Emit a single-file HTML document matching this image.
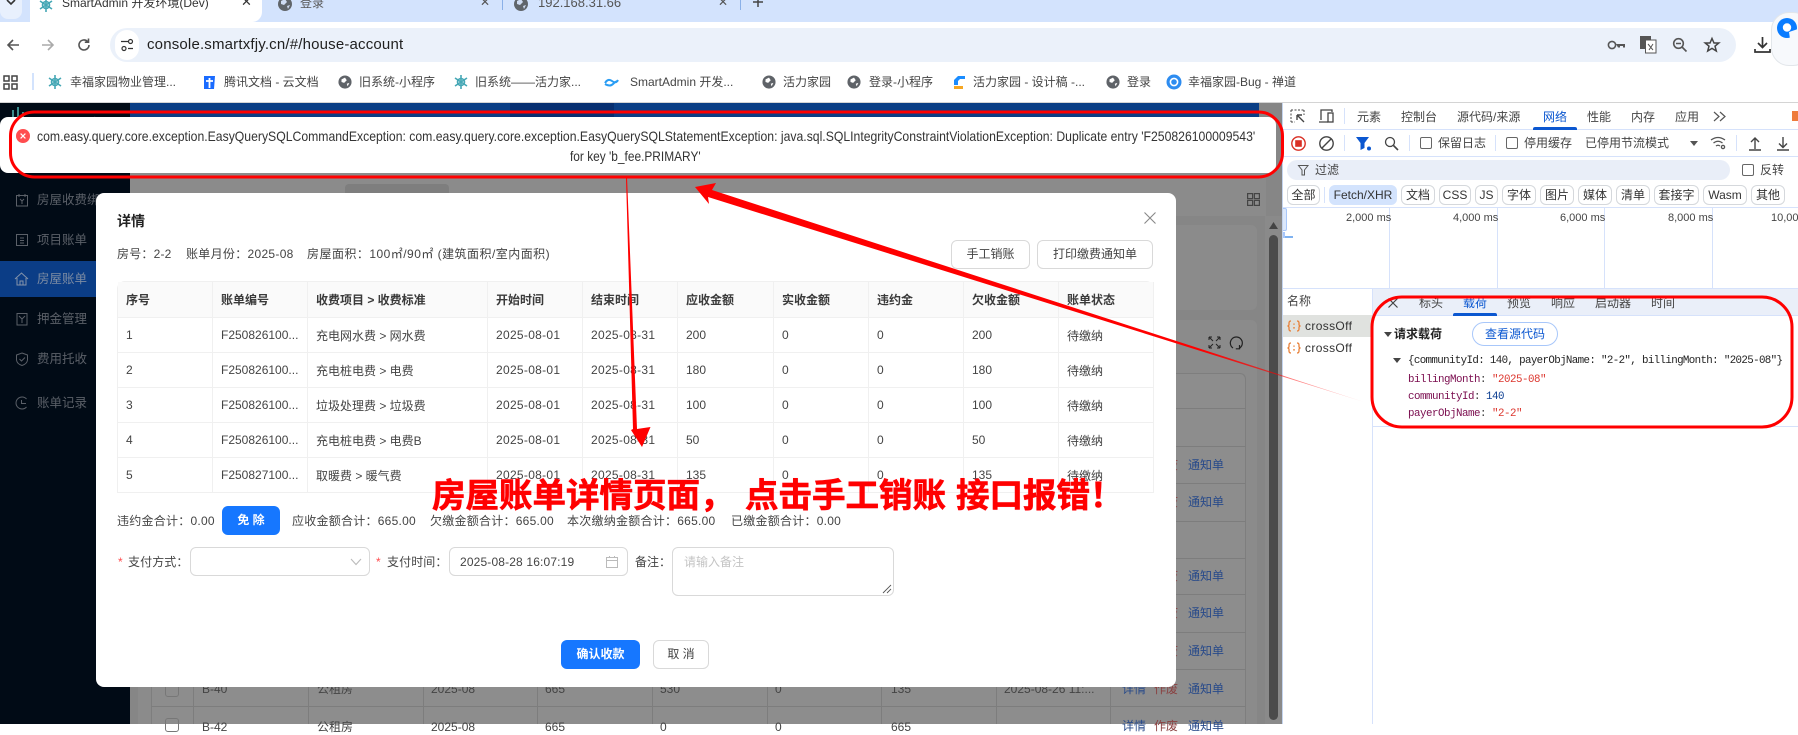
<!DOCTYPE html>
<html lang="zh"><head><meta charset="utf-8"><title>SmartAdmin</title>
<style>
*{box-sizing:border-box}
html,body{margin:0;padding:0;width:1798px;height:724px;overflow:hidden;background:#fff;font-family:"Liberation Sans","Noto Sans CJK SC",sans-serif;font-size:12px;color:#333}
.a{position:absolute}
.t{position:absolute;white-space:nowrap;transform:translateY(-50%);line-height:16px}
svg{position:absolute;overflow:visible}
.l{position:absolute;background:#7d7d7d}
.bm{color:#444}
.side{color:#5b6068;font-size:12.5px}
.chip{position:absolute;top:185px;height:20px;border:1px solid #d5d8dc;border-radius:6px;text-align:center;line-height:18px;color:#333;font-size:12px}
.dt{color:#444}
.bg{color:#444}
.sum{letter-spacing:.25px;color:#444}
.mono{font-family:'Liberation Mono',monospace;font-size:10.8px;letter-spacing:-.48px;color:#7a0c4e}
table.d{position:absolute;left:21px;top:88px;width:1036px;border-collapse:separate;border-spacing:0;table-layout:fixed;font-size:12px;color:#444;border-top:1px solid #f0f0f0;border-left:1px solid #f0f0f0;border-radius:8px 8px 0 0}
table.d th,table.d td{border-right:1px solid #f0f0f0;border-bottom:1px solid #f0f0f0;padding:0 8px;text-align:left;white-space:nowrap;overflow:hidden;height:35px}
table.d th{background:#fafafa;font-weight:700;color:#3a3a3a;height:36px}
table.d td.dd{letter-spacing:.3px}
.btn{position:absolute;border:1px solid #d9d9d9;border-radius:6px;background:#fff;text-align:center;color:#444;font-size:12px}
.inp{position:absolute;border:1px solid #d9d9d9;border-radius:6px;background:#fff}
.req{color:#ff4d4f}
.big{position:absolute;color:#f00;font-weight:700;font-size:33.5px;line-height:40px;white-space:nowrap;top:473px;font-family:"Noto Sans CJK SC","Liberation Sans",sans-serif;-webkit-text-stroke:.6px #f00;text-shadow:0 0 1px #ff8ac0}
</style></head><body>

<!-- tab strip -->
<div class="a" style="left:0;top:0;width:1798px;height:22px;background:#d3e3fd"></div>
<div class="a" style="left:0;top:0;width:22px;height:19px;background:#e8f0fd;border-radius:0 0 8px 8px"></div>
<svg style="left:6px;top:0" width="12" height="8"><path d="M1 0 L5 4 L9 0" fill="none" stroke="#333" stroke-width="1.6"/></svg>
<div class="a" style="left:30px;top:0;width:232px;height:22px;background:#fff;border-radius:0 0 10px 0"></div>
<svg style="left:38px;top:-3px" width="16" height="16" viewBox="0 0 16 16"><g stroke="#45a7b5" stroke-width="1.6" fill="none"><path d="M8 1V15M2 4L14 12M14 4L2 12"/><circle cx="8" cy="8" r="3.5"/></g></svg>
<div class="t" style="left:62px;top:3px;color:#333">SmartAdmin 开发环境(Dev)</div>
<div class="t" style="left:241px;top:2px;font-size:13px;color:#333">✕</div>
<svg style="left:277px;top:-4px" width="16" height="16" viewBox="0 0 16 16"><circle cx="8" cy="8" r="7" fill="#60656a"/><path d="M4 5L8 3L10 6L7 9L4 8ZM10 10L13 9L11 13Z" fill="#cfdcf2"/></svg>
<div class="t" style="left:300px;top:3px;color:#555">登录</div>
<div class="t" style="left:480px;top:2px;font-size:12px;color:#555">✕</div>
<div class="a" style="left:502px;top:0;width:1px;height:10px;background:#8ab0e8"></div>
<svg style="left:513px;top:-4px" width="16" height="16" viewBox="0 0 16 16"><circle cx="8" cy="8" r="7" fill="#60656a"/><path d="M4 5L8 3L10 6L7 9L4 8ZM10 10L13 9L11 13Z" fill="#cfdcf2"/></svg>
<div class="t" style="left:538px;top:3px;color:#555;font-size:13px">192.168.31.66</div>
<div class="t" style="left:718px;top:2px;font-size:12px;color:#555">✕</div>
<div class="a" style="left:740px;top:0;width:1px;height:10px;background:#8ab0e8"></div>
<svg style="left:752px;top:-3px" width="12" height="12"><path d="M6 0V10M1 5H11" stroke="#444" stroke-width="1.5"/></svg>

<!-- toolbar -->
<svg style="left:5px;top:37px" width="16" height="16" viewBox="0 0 16 16"><path d="M14 8H3M8 3L3 8L8 13" fill="none" stroke="#555" stroke-width="1.6"/></svg>
<svg style="left:40px;top:37px" width="16" height="16" viewBox="0 0 16 16"><path d="M2 8H13M8 3L13 8L8 13" fill="none" stroke="#aaa" stroke-width="1.6"/></svg>
<svg style="left:76px;top:37px" width="16" height="16" viewBox="0 0 16 16"><path d="M13 8A5 5 0 1 1 11.5 4.4M12.5 1.5V5.2H8.8" fill="none" stroke="#555" stroke-width="1.6"/></svg>
<div class="a" style="left:110px;top:28px;width:1626px;height:34px;background:#ebf1fa;border-radius:17px"></div>
<div class="a" style="left:115px;top:30px;width:24px;height:30px;background:#fff;border-radius:14px"></div>
<svg style="left:120px;top:38px" width="14" height="14" viewBox="0 0 14 14"><g fill="none" stroke="#333" stroke-width="1.2"><path d="M1 3.5H8M8 10.5H13"/><circle cx="10.5" cy="3.5" r="2"/><circle cx="4" cy="10.5" r="2"/></g></svg>
<div class="t" style="left:147px;top:45px;font-size:15px;color:#1f1f1f;letter-spacing:.18px">console.smartxfjy.cn/#/house-account</div>
<svg style="left:1607px;top:38px" width="20" height="14" viewBox="0 0 20 14"><circle cx="5" cy="7" r="3.6" fill="none" stroke="#555" stroke-width="1.6"/><path d="M9 6H18V9.5H16V8H13V9.5H11" fill="#555"/></svg>
<svg style="left:1640px;top:36px" width="17" height="18" viewBox="0 0 17 18"><rect x="0" y="0" width="11" height="13" fill="#555"/><rect x="5.5" y="4" width="10.5" height="13" fill="#fff" stroke="#555"/><path d="M8 8L13 14M13 8L9 14" stroke="#555"/></svg>
<svg style="left:1672px;top:37px" width="16" height="16" viewBox="0 0 16 16"><circle cx="6.5" cy="6.5" r="4.8" fill="none" stroke="#555" stroke-width="1.6"/><path d="M10 10L14.5 14.5M4 6.5H9" stroke="#555" stroke-width="1.6"/></svg>
<svg style="left:1704px;top:37px" width="16" height="16" viewBox="0 0 16 16"><path d="M8 1.5L10 6H14.8L11 9.2L12.3 14L8 11.4L3.7 14L5 9.2L1.2 6H6Z" fill="none" stroke="#444" stroke-width="1.5"/></svg>
<svg style="left:1754px;top:36px" width="17" height="18" viewBox="0 0 17 18"><path d="M8.5 1V11M4 7L8.5 11.5L13 7M1 13V16H16V13" fill="none" stroke="#333" stroke-width="1.7"/></svg>
<div class="a" style="left:1771px;top:12px;width:40px;height:54px;background:#f7f9fc;border:1px solid #e2e6ea;border-radius:18px"></div>
<svg style="left:1776px;top:17px" width="22" height="22" viewBox="0 0 22 22"><circle cx="11" cy="11" r="10" fill="#0a7cff"/><circle cx="11" cy="10.5" r="4.2" fill="#fff"/><path d="M13 15L22 12V22H14Z" fill="#f7f9fc"/></svg>

<!-- bookmarks -->
<svg style="left:3px;top:75px" width="15" height="15"><g fill="none" stroke="#444" stroke-width="1.5"><rect x="1" y="1" width="5" height="5"/><rect x="9" y="1" width="5" height="5"/><rect x="1" y="9" width="5" height="5"/><rect x="9" y="9" width="5" height="5"/></g></svg>
<div class="a" style="left:32px;top:73px;width:2px;height:17px;background:#d3e3fd"></div>
<svg style="left:47px;top:74px" width="16" height="16" viewBox="0 0 16 16"><g stroke="#45a7b5" stroke-width="1.6" fill="none"><path d="M8 1V15M2 4L14 12M14 4L2 12"/><circle cx="8" cy="8" r="3.5"/></g></svg>
<div class="t bm" style="left:70px;top:82px">幸福家园物业管理...</div>
<svg style="left:202px;top:74px" width="15" height="16" viewBox="0 0 15 16"><path d="M2 2H13L12 15H2Z" fill="#1a6bff"/><path d="M7.5 4V14M4 7H11" stroke="#fff" stroke-width="1.8"/></svg>
<div class="t bm" style="left:224px;top:82px">腾讯文档 - 云文档</div>
<svg style="left:338px;top:75px" width="14" height="14" viewBox="0 0 16 16"><circle cx="8" cy="8" r="7.5" fill="#5f6368"/><path d="M4 5L8 3L10 6L7 9L4 8ZM10 10L13 9L11 13Z" fill="#fff"/></svg>
<div class="t bm" style="left:359px;top:82px">旧系统-小程序</div>
<svg style="left:453px;top:74px" width="16" height="16" viewBox="0 0 16 16"><g stroke="#45a7b5" stroke-width="1.6" fill="none"><path d="M8 1V15M2 4L14 12M14 4L2 12"/><circle cx="8" cy="8" r="3.5"/></g></svg>
<div class="t bm" style="left:475px;top:82px">旧系统——活力家...</div>
<svg style="left:604px;top:76px" width="15" height="12" viewBox="0 0 15 12"><path d="M1 7Q4 2 8 5T14 4M1 8Q6 11 9 8T14 5" fill="none" stroke="#2a9df4" stroke-width="2"/></svg>
<div class="t bm" style="left:630px;top:82px">SmartAdmin 开发...</div>
<svg style="left:762px;top:75px" width="14" height="14" viewBox="0 0 16 16"><circle cx="8" cy="8" r="7.5" fill="#5f6368"/><path d="M4 5L8 3L10 6L7 9L4 8ZM10 10L13 9L11 13Z" fill="#fff"/></svg>
<div class="t bm" style="left:783px;top:82px">活力家园</div>
<svg style="left:847px;top:75px" width="14" height="14" viewBox="0 0 16 16"><circle cx="8" cy="8" r="7.5" fill="#5f6368"/><path d="M4 5L8 3L10 6L7 9L4 8ZM10 10L13 9L11 13Z" fill="#fff"/></svg>
<div class="t bm" style="left:869px;top:82px">登录-小程序</div>
<svg style="left:952px;top:75px" width="14" height="14" viewBox="0 0 14 14"><path d="M13 1H6L2 5V10H6V6L8 4H13Z" fill="#1a8cff"/><path d="M2 11H11V14H2Z" fill="#f5a623"/></svg>
<div class="t bm" style="left:973px;top:82px">活力家园 - 设计稿 -...</div>
<svg style="left:1106px;top:75px" width="14" height="14" viewBox="0 0 16 16"><circle cx="8" cy="8" r="7.5" fill="#5f6368"/><path d="M4 5L8 3L10 6L7 9L4 8ZM10 10L13 9L11 13Z" fill="#fff"/></svg>
<div class="t bm" style="left:1127px;top:82px">登录</div>
<svg style="left:1166px;top:74px" width="16" height="16" viewBox="0 0 16 16"><circle cx="8" cy="8" r="7.5" fill="#2d8cf0"/><circle cx="8" cy="8" r="3.6" fill="none" stroke="#fff" stroke-width="1.6"/></svg>
<div class="t bm" style="left:1188px;top:82px">幸福家园-Bug - 禅道</div>
<div class="a" style="left:0;top:102px;width:1798px;height:1px;background:#d4d4d4"></div>

<!-- page behind overlay -->
<div class="a" style="left:0;top:103px;width:1282px;height:621px;background:#868686"></div>
<div class="a" style="left:0;top:103px;width:130px;height:621px;background:#010b16"></div>
<div class="a" style="left:130px;top:103px;width:1129px;height:14px;background:#0a3e85"></div>
<div class="a" style="left:510px;top:103px;width:104px;height:14px;background:#072f70"></div>
<div class="t" style="left:60px;top:124px;font-size:14px;color:#7c8288">幸福家园</div>
<svg style="left:8px;top:106px" width="18" height="14"><path d="M5 14V4M10 14V1M15 14V6" stroke="#3a8d8d" stroke-width="2"/></svg>

<!-- sidebar -->
<div class="a" style="left:0;top:261px;width:130px;height:36px;background:#0b3d86"></div>
<svg style="left:15px;top:193px" width="14" height="14"><g fill="none" stroke="#5b6068"><rect x="1.5" y="2.5" width="11" height="10.5"/><path d="M4 1V4M10 1V4M5 6L7 8L9 6M7 8V11"/></g></svg>
<div class="t side" style="left:37px;top:200px">房屋收费绑定</div>
<svg style="left:15px;top:233px" width="14" height="14"><g fill="none" stroke="#5b6068"><rect x="1.5" y="1.5" width="11" height="11"/><path d="M5 5H9M5 7.5H9M5 10H9"/></g></svg>
<div class="t side" style="left:37px;top:240px">项目账单</div>
<svg style="left:14px;top:271px" width="15" height="15"><g fill="none" stroke="#8494ab"><path d="M1 8L7.5 2L14 8M3 7V14H12V7M6 14V10H9V14"/></g></svg>
<div class="t side" style="left:37px;top:279px;color:#7d8ca3">房屋账单</div>
<svg style="left:15px;top:312px" width="14" height="14"><g fill="none" stroke="#5b6068"><rect x="2" y="1.5" width="10" height="11.5"/><path d="M4 4L7 7L10 4M7 7V11"/></g></svg>
<div class="t side" style="left:37px;top:319px">押金管理</div>
<svg style="left:15px;top:352px" width="14" height="14"><g fill="none" stroke="#5b6068"><path d="M7 1L12.5 3V8Q12 12 7 13.5Q2 12 1.5 8V3ZM4.5 7L6.5 9L10 5.5"/></g></svg>
<div class="t side" style="left:37px;top:359px">费用托收</div>
<svg style="left:14px;top:396px" width="15" height="14"><g fill="none" stroke="#5b6068"><path d="M12.5 11A6 6 0 1 1 12.5 3M7.5 4V7.5H12"/></g></svg>
<div class="t side" style="left:37px;top:403px">账单记录</div>

<!-- page content behind -->
<div class="a" style="left:130px;top:173px;width:1136px;height:43px;background:#8b8b8b"></div>
<div class="a" style="left:345px;top:184px;width:104px;height:20px;background:#7e7e7e;border-radius:4px 4px 0 0"></div>
<svg style="left:1247px;top:193px" width="14" height="14"><g fill="none" stroke="#444" stroke-width="1.2"><rect x=".6" y=".6" width="5" height="5"/><rect x="7.4" y=".6" width="5" height="5"/><rect x=".6" y="7.4" width="5" height="5"/><rect x="7.4" y="7.4" width="5" height="5"/></g></svg>
<div class="a" style="left:138px;top:225px;width:1119px;height:85px;background:#8b8b8b;border-radius:6px"></div>
<div class="a" style="left:138px;top:320px;width:1119px;height:404px;background:#8b8b8b;border-radius:6px 6px 0 0"></div>
<svg style="left:1208px;top:336px" width="13" height="13"><path d="M1 1L5 5M12 1L8 5M1 12L5 8M12 12L8 8M1 1V4M1 1H4M12 1V4M12 1H9M1 12V9M1 12H4M12 12V9M12 12H9" stroke="#222" fill="none"/></svg>
<svg style="left:1229px;top:336px" width="14" height="14"><path d="M4 12A6 6 0 1 1 10 12.4M10.5 9V12.8H6.8" stroke="#222" stroke-width="1.2" fill="none"/></svg>
<div class="a" style="left:151px;top:373px;width:1095px;height:351px;background:#8d8d8d;border:1px solid #7e7e7e;border-bottom:0;border-radius:6px 6px 0 0"></div>
<div class="l" style="left:151px;top:408px;width:1095px;height:1px"></div>
<div class="l" style="left:151px;top:446px;width:1095px;height:1px"></div>
<div class="l" style="left:151px;top:483px;width:1095px;height:1px"></div>
<div class="l" style="left:151px;top:521px;width:1095px;height:1px"></div>
<div class="l" style="left:151px;top:558px;width:1095px;height:1px"></div>
<div class="l" style="left:151px;top:594px;width:1095px;height:1px"></div>
<div class="l" style="left:151px;top:632px;width:1095px;height:1px"></div>
<div class="l" style="left:151px;top:669px;width:1095px;height:1px"></div>
<div class="l" style="left:151px;top:706px;width:1095px;height:1px"></div>
<div class="l" style="left:193px;top:373px;width:1px;height:351px"></div>
<div class="l" style="left:308px;top:373px;width:1px;height:351px"></div>
<div class="l" style="left:423px;top:373px;width:1px;height:351px"></div>
<div class="l" style="left:537px;top:373px;width:1px;height:351px"></div>
<div class="l" style="left:652px;top:373px;width:1px;height:351px"></div>
<div class="l" style="left:767px;top:373px;width:1px;height:351px"></div>
<div class="l" style="left:881px;top:373px;width:1px;height:351px"></div>
<div class="l" style="left:996px;top:373px;width:1px;height:351px"></div>
<div class="l" style="left:1110px;top:373px;width:1px;height:351px"></div>
<div class="t" style="left:1154px;top:465px;color:#8a4040">作废</div><div class="t" style="left:1188px;top:465px;color:#284a8a">通知单</div>
<div class="t" style="left:1154px;top:502px;color:#8a4040">作废</div><div class="t" style="left:1188px;top:502px;color:#284a8a">通知单</div>
<div class="t" style="left:1154px;top:576px;color:#8a4040">作废</div><div class="t" style="left:1188px;top:576px;color:#284a8a">通知单</div>
<div class="t" style="left:1154px;top:613px;color:#8a4040">作废</div><div class="t" style="left:1188px;top:613px;color:#284a8a">通知单</div>
<div class="t" style="left:1154px;top:651px;color:#8a4040">作废</div><div class="t" style="left:1188px;top:651px;color:#284a8a">通知单</div>
<div class="a" style="left:165px;top:683px;width:14px;height:14px;border:1px solid #777;border-radius:3px"></div>
<div class="a" style="left:165px;top:718px;width:14px;height:14px;border:1px solid #777;border-radius:3px"></div>
<div class="t bg" style="left:202px;top:689px">B-40</div><div class="t bg" style="left:317px;top:689px">公租房</div><div class="t bg" style="left:431px;top:689px">2025-08</div><div class="t bg" style="left:545px;top:689px">665</div><div class="t bg" style="left:660px;top:689px">530</div><div class="t bg" style="left:775px;top:689px">0</div><div class="t bg" style="left:891px;top:689px">135</div><div class="t bg" style="left:1004px;top:689px">2025-08-26 11:...</div>
<div class="t" style="left:1122px;top:689px;color:#284a8a">详情</div><div class="t" style="left:1154px;top:689px;color:#8a4040">作废</div><div class="t" style="left:1188px;top:689px;color:#284a8a">通知单</div>
<div class="t bg" style="left:202px;top:727px">B-42</div><div class="t bg" style="left:317px;top:727px">公租房</div><div class="t bg" style="left:431px;top:727px">2025-08</div><div class="t bg" style="left:545px;top:727px">665</div><div class="t bg" style="left:660px;top:727px">0</div><div class="t bg" style="left:775px;top:727px">0</div><div class="t bg" style="left:891px;top:727px">665</div>
<div class="t" style="left:1122px;top:726px;color:#284a8a">详情</div><div class="t" style="left:1154px;top:726px;color:#8a4040">作废</div><div class="t" style="left:1188px;top:726px;color:#284a8a">通知单</div>
<!-- scrollbar -->
<div class="a" style="left:1265px;top:216px;width:17px;height:508px;background:#8a8a8a"></div>
<div class="a" style="left:1269px;top:235px;width:9px;height:485px;background:#4b4b4b;border-radius:4.5px"></div>
<svg style="left:1269px;top:222px" width="9" height="7"><path d="M4.5 0L9 7H0Z" fill="#444"/></svg>

<!-- modal -->
<div class="a" style="left:96px;top:193px;width:1080px;height:494px;background:#fff;border-radius:8px">
  <div class="t" style="left:21px;top:28px;font-size:14px;font-weight:700;color:#222">详情</div>
  <svg style="left:1048px;top:19px" width="12" height="12"><path d="M.5 .5L11.5 11.5M11.5 .5L.5 11.5" stroke="#888" stroke-width="1.1"/></svg>
  <div class="t" style="left:21px;top:61px;color:#444;letter-spacing:.2px">房号：2-2</div>
  <div class="t" style="left:90px;top:61px;color:#444;letter-spacing:.3px">账单月份：2025-08</div>
  <div class="t" style="left:211px;top:61px;color:#444;letter-spacing:.47px">房屋面积：100㎡/90㎡ (建筑面积/室内面积)</div>
  <div class="btn" style="left:855px;top:47px;width:79px;height:29px;line-height:27px">手工销账</div>
  <div class="btn" style="left:941px;top:47px;width:116px;height:29px;line-height:27px">打印缴费通知单</div>
  <table class="d">
    <colgroup><col style="width:95px"><col style="width:95px"><col style="width:180px"><col style="width:95px"><col style="width:95px"><col style="width:96px"><col style="width:95px"><col style="width:95px"><col style="width:95px"><col style="width:95px"></colgroup>
    <tr><th>序号</th><th>账单编号</th><th>收费项目 &gt; 收费标准</th><th>开始时间</th><th>结束时间</th><th>应收金额</th><th>实收金额</th><th>违约金</th><th>欠收金额</th><th>账单状态</th></tr>
    <tr><td>1</td><td>F250826100...</td><td>充电网水费 &gt; 网水费</td><td class="dd">2025-08-01</td><td class="dd">2025-08-31</td><td>200</td><td>0</td><td>0</td><td>200</td><td>待缴纳</td></tr>
    <tr><td>2</td><td>F250826100...</td><td>充电桩电费 &gt; 电费</td><td class="dd">2025-08-01</td><td class="dd">2025-08-31</td><td>180</td><td>0</td><td>0</td><td>180</td><td>待缴纳</td></tr>
    <tr><td>3</td><td>F250826100...</td><td>垃圾处理费 &gt; 垃圾费</td><td class="dd">2025-08-01</td><td class="dd">2025-08-31</td><td>100</td><td>0</td><td>0</td><td>100</td><td>待缴纳</td></tr>
    <tr><td>4</td><td>F250826100...</td><td>充电桩电费 &gt; 电费B</td><td class="dd">2025-08-01</td><td class="dd">2025-08-31</td><td>50</td><td>0</td><td>0</td><td>50</td><td>待缴纳</td></tr>
    <tr><td>5</td><td>F250827100...</td><td>取暖费 &gt; 暖气费</td><td class="dd">2025-08-01</td><td class="dd">2025-08-31</td><td>135</td><td>0</td><td>0</td><td>135</td><td>待缴纳</td></tr>
  </table>
  <div class="t sum" style="left:21px;top:328px">违约金合计：0.00</div>
  <div class="a" style="left:126px;top:313px;width:58px;height:29px;background:#1677ff;border-radius:6px;color:#fff;text-align:center;line-height:29px;font-weight:700">免 除</div>
  <div class="t sum" style="left:196px;top:328px">应收金额合计：665.00</div>
  <div class="t sum" style="left:334px;top:328px">欠缴金额合计：665.00</div>
  <div class="t sum" style="left:471px;top:328px">本次缴纳金额合计：665.00</div>
  <div class="t sum" style="left:635px;top:328px">已缴金额合计：0.00</div>

  <div class="t req" style="left:22px;top:369px">*</div>
  <div class="t" style="left:32px;top:369px;color:#444;letter-spacing:.1px">支付方式：</div>
  <div class="inp" style="left:94px;top:354px;width:180px;height:29px"></div>
  <svg style="left:254px;top:365px" width="12" height="8"><path d="M1 1L6 6.5L11 1" fill="none" stroke="#bbb" stroke-width="1.1"/></svg>
  <div class="t req" style="left:280px;top:369px">*</div>
  <div class="t" style="left:291px;top:369px;color:#444;letter-spacing:.1px">支付时间：</div>
  <div class="inp" style="left:353px;top:354px;width:179px;height:29px"></div>
  <div class="t" style="left:364px;top:369px;color:#444;letter-spacing:.15px">2025-08-28 16:07:19</div>
  <svg style="left:510px;top:363px" width="12" height="12"><g fill="none" stroke="#bbb"><rect x=".5" y="1.5" width="11" height="10"/><path d="M.5 4.5H11.5M3.5 0V2M8.5 0V2"/></g></svg>
  <div class="t" style="left:539px;top:369px;color:#444">备注：</div>
  <div class="inp" style="left:576px;top:354px;width:222px;height:49px"></div>
  <div class="t" style="left:588px;top:369px;color:#c4c4c4">请输入备注</div>
  <svg style="left:786px;top:391px" width="10" height="10"><path d="M1 9L9 1M5 9L9 5" stroke="#555" stroke-width=".9"/></svg>

  <div class="a" style="left:465px;top:447px;width:79px;height:29px;background:#1677ff;border-radius:6px;color:#fff;text-align:center;line-height:29px;font-weight:700">确认收款</div>
  <div class="btn" style="left:557px;top:447px;width:56px;height:29px;line-height:27px">取 消</div>
</div>

<!-- toast -->
<div class="a" style="left:0;top:117px;width:1276px;height:56px;background:#fff;border-radius:8px"></div>
<svg style="left:16px;top:129px" width="14" height="14"><circle cx="7" cy="7" r="7" fill="#ff4d4f"/><path d="M4.6 4.6L9.4 9.4M9.4 4.6L4.6 9.4" stroke="#fff" stroke-width="1.2"/></svg>
<div class="a" style="left:37px;top:126px;font-size:14px;line-height:20px;color:#333;white-space:nowrap;transform-origin:0 50%;transform:scaleX(.8725)">com.easy.query.core.exception.EasyQuerySQLCommandException: com.easy.query.core.exception.EasyQuerySQLStatementException: java.sql.SQLIntegrityConstraintViolationException: Duplicate entry 'F250826100009543'</div>
<div class="a" style="left:570px;top:146px;font-size:14px;line-height:20px;color:#333;white-space:nowrap;transform-origin:0 50%;transform:scaleX(.85)">for key 'b_fee.PRIMARY'</div>

<!-- devtools -->
<div class="a" style="left:1282px;top:103px;width:516px;height:621px;background:#fff;border-left:1px solid #c4d4ee"></div>
<div class="a" style="left:1283px;top:129px;width:515px;height:1px;background:#d6e2fb"></div>
<div class="a" style="left:1283px;top:156px;width:515px;height:1px;background:#d6e2fb"></div>
<div class="a" style="left:1283px;top:207px;width:515px;height:1px;background:#d6e2fb"></div>
<div class="a" style="left:1283px;top:288px;width:515px;height:1px;background:#d6e2fb"></div>
<svg style="left:1290px;top:109px" width="16" height="15"><g fill="none" stroke="#444"><path d="M1 1H14M1 1V13M1 13H5M14 1V6" stroke-dasharray="2 1.5"/><path d="M7 6L14 13M7 6V11M7 6H12" stroke-width="1.4"/></g></svg>
<svg style="left:1318px;top:109px" width="17" height="14"><g fill="none" stroke="#444" stroke-width="1.3"><path d="M1 13H10M3 11V1H14V3"/><rect x="10" y="4" width="5" height="9"/></g></svg>
<div class="a" style="left:1344px;top:108px;width:1px;height:16px;background:#d6e2fb"></div>
<div class="t dt" style="left:1357px;top:117px">元素</div>
<div class="t dt" style="left:1401px;top:117px">控制台</div>
<div class="t dt" style="left:1457px;top:117px">源代码/来源</div>
<div class="t" style="left:1543px;top:117px;color:#0b57d0">网络</div>
<div class="a" style="left:1533px;top:127px;width:44px;height:3px;background:#0b57d0;border-radius:2px 2px 0 0"></div>
<div class="t dt" style="left:1587px;top:117px">性能</div>
<div class="t dt" style="left:1631px;top:117px">内存</div>
<div class="t dt" style="left:1675px;top:117px">应用</div>
<svg style="left:1713px;top:111px" width="13" height="11"><path d="M1 1L6 5.5L1 10M7 1L12 5.5L7 10" fill="none" stroke="#555" stroke-width="1.2"/></svg>
<div class="a" style="left:1792px;top:111px;width:6px;height:10px;background:#ee7b3c"></div>

<svg style="left:1291px;top:136px" width="15" height="15"><circle cx="7.5" cy="7.5" r="6.7" fill="none" stroke="#d93025" stroke-width="1.4"/><rect x="4.2" y="4.2" width="6.6" height="6.6" fill="#d93025"/></svg>
<svg style="left:1319px;top:136px" width="15" height="15"><circle cx="7.5" cy="7.5" r="6.7" fill="none" stroke="#444" stroke-width="1.4"/><path d="M3 12L12 3" stroke="#444" stroke-width="1.4"/></svg>
<div class="a" style="left:1344px;top:135px;width:1px;height:16px;background:#d6e2fb"></div>
<svg style="left:1356px;top:137px" width="16" height="14"><path d="M0 0H13L8.5 6V11L4.5 13V6Z" fill="#0b57d0"/><circle cx="13" cy="11.5" r="2" fill="#0b57d0"/></svg>
<svg style="left:1384px;top:136px" width="15" height="15"><circle cx="6" cy="6" r="4.5" fill="none" stroke="#444" stroke-width="1.3"/><path d="M9.5 9.5L14 14" stroke="#444" stroke-width="1.6"/></svg>
<div class="a" style="left:1409px;top:135px;width:1px;height:16px;background:#d6e2fb"></div>
<div class="a" style="left:1420px;top:137px;width:12px;height:12px;border:1px solid #666;border-radius:2px"></div>
<div class="t dt" style="left:1438px;top:143px">保留日志</div>
<div class="a" style="left:1495px;top:135px;width:1px;height:16px;background:#d6e2fb"></div>
<div class="a" style="left:1506px;top:137px;width:12px;height:12px;border:1px solid #666;border-radius:2px"></div>
<div class="t dt" style="left:1524px;top:143px">停用缓存</div>
<div class="t dt" style="left:1585px;top:143px">已停用节流模式</div>
<svg style="left:1690px;top:141px" width="8" height="5"><path d="M0 0H8L4 5Z" fill="#555"/></svg>
<svg style="left:1710px;top:136px" width="16" height="14"><g fill="none" stroke="#555" stroke-width="1.3"><path d="M1 4Q8 -1 15 4M3.5 7Q8 3.5 12.5 7M6 10Q8 8.5 10 10"/><circle cx="13" cy="11" r="1.6"/></g></svg>
<div class="a" style="left:1736px;top:135px;width:1px;height:16px;background:#d6e2fb"></div>
<svg style="left:1748px;top:136px" width="14" height="15"><path d="M7 13V2M3 6L7 2L11 6M1 14H13" fill="none" stroke="#444" stroke-width="1.4"/></svg>
<svg style="left:1776px;top:136px" width="14" height="15"><path d="M7 1V11M3 7.5L7 11.5L11 7.5M1 14H13" fill="none" stroke="#444" stroke-width="1.4"/></svg>

<div class="a" style="left:1287px;top:160px;width:443px;height:20px;background:#e9eef8;border-radius:10px"></div>
<svg style="left:1298px;top:165px" width="11" height="11"><path d="M.5 .5H10L6.5 5V10H4V5Z" fill="none" stroke="#555"/></svg>
<div class="t dt" style="left:1315px;top:170px">过滤</div>
<div class="a" style="left:1742px;top:164px;width:12px;height:12px;border:1px solid #666;border-radius:2px"></div>
<div class="t dt" style="left:1760px;top:170px">反转</div>

<div class="chip" style="left:1287px;width:33px">全部</div>
<div class="a" style="left:1324px;top:187px;width:1px;height:16px;background:#d6e2fb"></div>
<div class="chip" style="left:1329px;width:68px;background:#d3e3fd;border-color:#d3e3fd">Fetch/XHR</div>
<div class="chip" style="left:1401px;width:34px">文档</div>
<div class="chip" style="left:1439px;width:32px">CSS</div>
<div class="chip" style="left:1475px;width:23px">JS</div>
<div class="chip" style="left:1502px;width:34px">字体</div>
<div class="chip" style="left:1540px;width:34px">图片</div>
<div class="chip" style="left:1578px;width:34px">媒体</div>
<div class="chip" style="left:1616px;width:34px">清单</div>
<div class="chip" style="left:1654px;width:45px">套接字</div>
<div class="chip" style="left:1703px;width:44px">Wasm</div>
<div class="chip" style="left:1751px;width:34px">其他</div>

<div class="a" style="left:1389px;top:208px;width:1px;height:80px;background:#d6e2fb"></div>
<div class="a" style="left:1497px;top:208px;width:1px;height:80px;background:#d6e2fb"></div>
<div class="a" style="left:1604px;top:208px;width:1px;height:80px;background:#d6e2fb"></div>
<div class="a" style="left:1712px;top:208px;width:1px;height:80px;background:#d6e2fb"></div>
<div class="t" style="left:1346px;top:218px;font-size:11px;color:#444">2,000 ms</div>
<div class="t" style="left:1453px;top:218px;font-size:11px;color:#444">4,000 ms</div>
<div class="t" style="left:1560px;top:218px;font-size:11px;color:#444">6,000 ms</div>
<div class="t" style="left:1668px;top:218px;font-size:11px;color:#444">8,000 ms</div>
<div class="t" style="left:1771px;top:218px;font-size:11px;color:#444">10,000</div>
<div class="a" style="left:1283px;top:208px;width:4px;height:23px;background:#dce8fb;border:1px solid #a8c7fa;border-left:0;border-radius:0 2px 2px 0"></div>
<div class="a" style="left:1284px;top:236px;width:9px;height:2px;background:#7fb2f0"></div>
<div class="a" style="left:1283px;top:232px;width:2px;height:6px;background:#a8c7fa"></div>

<div class="t dt" style="left:1287px;top:301px;font-size:12px">名称</div>
<div class="a" style="left:1283px;top:315px;width:89px;height:1px;background:#d6e2fb"></div>
<div class="a" style="left:1283px;top:315px;width:89px;height:22px;background:#e0e2df"></div>
<div class="a" style="left:1372px;top:289px;width:1px;height:435px;background:#d6e2fb"></div>
<svg style="left:1287px;top:320px" width="14" height="12"><path d="M4 1Q2 1 2 3V5L1 6L2 7V9Q2 11 4 11M10 1Q12 1 12 3V5L13 6L12 7V9Q12 11 10 11" fill="none" stroke="#e8813a" stroke-width="1.3"/><path d="M7 3.5V4.8M7 7V8.6" stroke="#e8813a" stroke-width="1.4"/></svg>
<div class="t" style="left:1305px;top:326px;color:#333;font-size:12px;letter-spacing:.35px">crossOff</div>
<svg style="left:1287px;top:342px" width="14" height="12"><path d="M4 1Q2 1 2 3V5L1 6L2 7V9Q2 11 4 11M10 1Q12 1 12 3V5L13 6L12 7V9Q12 11 10 11" fill="none" stroke="#e8813a" stroke-width="1.3"/><path d="M7 3.5V4.8M7 7V8.6" stroke="#e8813a" stroke-width="1.4"/></svg>
<div class="t" style="left:1305px;top:348px;color:#333;font-size:12px;letter-spacing:.35px">crossOff</div>

<div class="a" style="left:1373px;top:289px;width:425px;height:26px;background:#eaeff9"></div>
<div class="a" style="left:1373px;top:315px;width:425px;height:1px;background:#d6e2fb"></div>
<svg style="left:1388px;top:298px" width="10" height="10"><path d="M.5 .5L9.5 9.5M9.5 .5L.5 9.5" stroke="#444" stroke-width="1.2"/></svg>
<div class="t dt" style="left:1419px;top:303px">标头</div>
<div class="t" style="left:1463px;top:303px;color:#0b57d0">载荷</div>
<div class="a" style="left:1453px;top:313px;width:44px;height:3px;background:#0b57d0;border-radius:2px 2px 0 0"></div>
<div class="t dt" style="left:1507px;top:303px">预览</div>
<div class="t dt" style="left:1551px;top:303px">响应</div>
<div class="t dt" style="left:1595px;top:303px">启动器</div>
<div class="t dt" style="left:1651px;top:303px">时间</div>

<svg style="left:1384px;top:332px" width="8" height="5"><path d="M0 0H8L4 5Z" fill="#444"/></svg>
<div class="t" style="left:1394px;top:334px;font-weight:700;color:#222">请求载荷</div>
<div class="a" style="left:1472px;top:322px;width:86px;height:24px;border:1px solid #a8c7fa;border-radius:12px;text-align:center;line-height:22px;color:#0b57d0">查看源代码</div>
<svg style="left:1393px;top:358px" width="8" height="5"><path d="M0 0H8L4 5Z" fill="#444"/></svg>
<div class="t mono" style="left:1408px;top:361px;letter-spacing:-.63px;color:#222">{communityId: 140, payerObjName: "2-2", billingMonth: "2025-08"}</div>
<div class="t mono" style="left:1408px;top:380px">billingMonth<span style="color:#333">: </span><span style="color:#dc362e">"2025-08"</span></div>
<div class="t mono" style="left:1408px;top:397px">communityId<span style="color:#333">: </span><span style="color:#0b3d91">140</span></div>
<div class="t mono" style="left:1408px;top:414px">payerObjName<span style="color:#333">: </span><span style="color:#dc362e">"2-2"</span></div>
<div class="a" style="left:1373px;top:426px;width:425px;height:1px;background:#d6e2fb"></div>

<!-- annotations -->
<svg style="left:0;top:0" width="1798" height="724" viewBox="0 0 1798 724">
  <defs><linearGradient id="g" gradientUnits="userSpaceOnUse" x1="1364" y1="402" x2="1200" y2="350"><stop offset="0" stop-color="#ff0000" stop-opacity=".15"/><stop offset="1" stop-color="#ff0000"/></linearGradient></defs>
  <rect x="10.5" y="112" width="1272" height="65" rx="24" fill="none" stroke="#f00" stroke-width="3"/>
  <rect x="1372" y="297" width="420" height="130" rx="30" fill="none" stroke="#f00" stroke-width="3"/>
  <path d="M695 187L716 183L712 190L1364 402L708 197L709 204Z" fill="url(#g)"/>
  <path d="M626 177L627 177L637 429L650.5 427L642 447L631 430L633 429Z" fill="#f00"/>
</svg>
<div class="big" style="left:432px">房屋账单详情页面，</div>
<div class="big" style="left:745px">点击手工销账</div>
<div class="big" style="left:956px">接口报错！</div>
</body></html>
